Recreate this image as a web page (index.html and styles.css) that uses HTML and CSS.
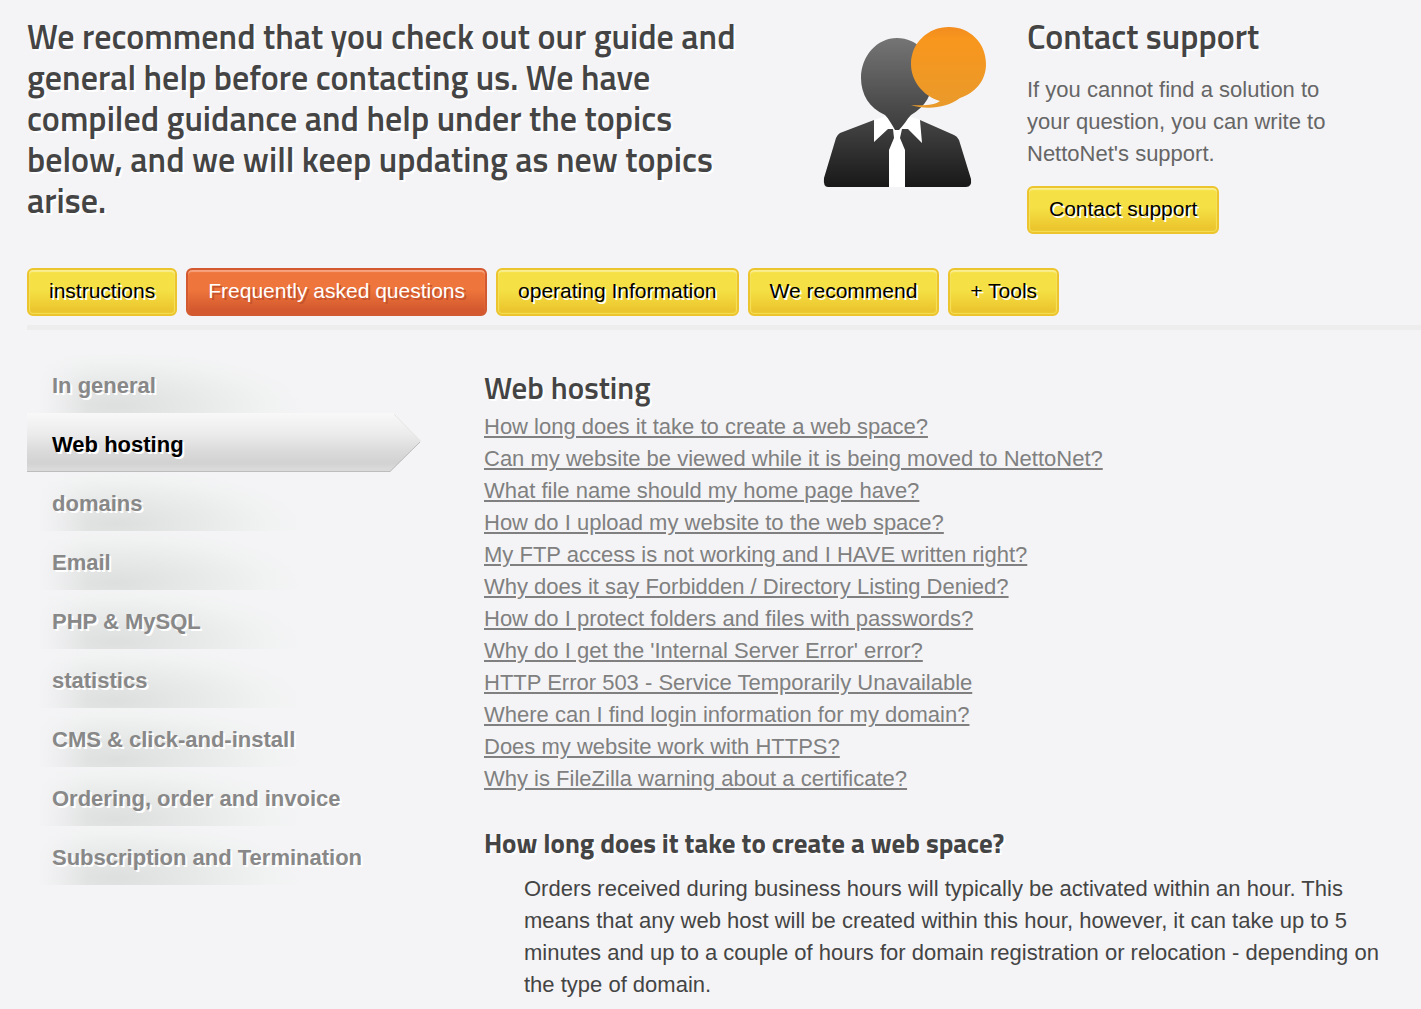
FILE: index.html
```html
<!DOCTYPE html>
<html lang="en">
  <head>
    <meta charset="UTF-8" />
    <meta name="viewport" content="width=device-width, initial-scale=1.0" />
    <title>Help - NettoNet</title>
    <link rel="stylesheet" href="styles.css">
  </head>
  <body>
    <header class="intro">
      <h1>We recommend that you check out our guide and general help before contacting us. We have compiled guidance and help under the topics below, and we will keep updating as new topics arise.</h1>
      <svg class="supporter" viewBox="0 0 164 162" aria-hidden="true">
        <defs>
          <linearGradient id="head" x1="0" y1="0" x2="0" y2="1">
            <stop offset="0" stop-color="#757575" />
            <stop offset="1" stop-color="#3c3c3c" />
          </linearGradient>
          <linearGradient id="suit" x1="0" y1="0" x2="0" y2="1">
            <stop offset="0" stop-color="#454545" />
            <stop offset="1" stop-color="#181818" />
          </linearGradient>
          <linearGradient id="bubble" x1="0" y1="0" x2="0" y2="1">
            <stop offset="0" stop-color="#f28c1f" />
            <stop offset="0.15" stop-color="#f8961d" />
            <stop offset="1" stop-color="#e99a2b" />
          </linearGradient>
        </defs>
        <path fill="url(#suit)" d="M51 93 L97 93 L131 108 Q134 109 136 113 L148 152 Q149 160 143 160 L5 160 Q0 160 1 151 L13 111 Q14 108 17 106 Z" />
        <path fill="#fff" d="M51 93 L63 89 L86 89 L97 93 L99 116 L85 102 L79 102 L77 111 L82 123 L82 160 L66 160 L66 123 L71 111 L70 102 L65 102 L51 115 Z" />
        <path fill="url(#head)" d="M74 11 C94 11 110 28 110 50 C110 67 102 80 88 88 C84 92 81 98 76 103 L72 103 C69 98 66 92 62 88 C46 81 38 67 38 51 C38 29 54 11 74 11 Z" />
        <path fill="url(#bubble)" d="M126 0 C147 0 163 16 163 37 C163 54 152 66 137 71 C124 81 104 83 88 78 C102 79 112 78 117 74 C100 69 88 54 88 37 C88 16 105 0 126 0 Z" />
      </svg>
      <section class="contact">
        <h2>Contact support</h2>
        <p>If you cannot find a solution to your question, you can write to NettoNet's support.</p>
        <a class="button" href="#">Contact support</a>
      </section>
    </header>

    <nav class="tabs">
      <a class="button" href="#">instructions</a>
      <a class="button selected" href="#">Frequently asked questions</a>
      <a class="button" href="#">operating Information</a>
      <a class="button" href="#">We recommend</a>
      <a class="button" href="#">+ Tools</a>
    </nav>

    <main class="content">
      <nav class="topics">
        <a href="#">In general</a>
        <a class="active" href="#">
          <svg class="arrow" viewBox="0 0 394 59" preserveAspectRatio="none" aria-hidden="true">
            <defs>
              <linearGradient id="bar" x1="0" y1="0" x2="0" y2="1">
                <stop offset="0" stop-color="#f8f8f8" />
                <stop offset="0.35" stop-color="#ececec" />
                <stop offset="0.65" stop-color="#dadada" />
                <stop offset="0.85" stop-color="#d2d2d2" />
                <stop offset="0.95" stop-color="#dadada" />
              </linearGradient>
            </defs>
            <path fill="url(#bar)" d="M0 0 H367 L394 28 L363 59 H0 Z" />
            <path fill="none" stroke="#bdbdbd" d="M0 58.500 H363 L393 29" />
            <path fill="none" stroke="#e6e6e6" d="M367 1 L393 28" />
          </svg>
          <span>Web hosting</span>
        </a>
        <a href="#">domains</a>
        <a href="#">Email</a>
        <a href="#">PHP &amp; MySQL</a>
        <a href="#">statistics</a>
        <a href="#">CMS &amp; click-and-install</a>
        <a href="#">Ordering, order and invoice</a>
        <a href="#">Subscription and Termination</a>
      </nav>

      <article class="faq">
        <h2>Web hosting</h2>
        <ul>
          <li><a href="#create">How long does it take to create a web space?</a></li>
          <li><a href="#">Can my website be viewed while it is being moved to NettoNet?</a></li>
          <li><a href="#">What file name should my home page have?</a></li>
          <li><a href="#">How do I upload my website to the web space?</a></li>
          <li><a href="#">My FTP access is not working and I HAVE written right?</a></li>
          <li><a href="#">Why does it say Forbidden / Directory Listing Denied?</a></li>
          <li><a href="#">How do I protect folders and files with passwords?</a></li>
          <li><a href="#">Why do I get the 'Internal Server Error' error?</a></li>
          <li><a href="#">HTTP Error 503 - Service Temporarily Unavailable</a></li>
          <li><a href="#">Where can I find login information for my domain?</a></li>
          <li><a href="#">Does my website work with HTTPS?</a></li>
          <li><a href="#">Why is FileZilla warning about a certificate?</a></li>
        </ul>
        <h3 id="create">How long does it take to create a web space?</h3>
        <p>Orders received during business hours will typically be activated within an hour. This means that any web host will be created within this hour, however, it can take up to 5 minutes and up to a couple of hours for domain registration or relocation - depending on the type of domain.</p>
      </article>
    </main>
  </body>
</html>
```

FILE: styles.css
```css
* {
  box-sizing: border-box;
}

body {
  margin: 0;
  padding: 16px 0 8px 27px;
  background-color: #f4f4f6;
  color: #444;
  font-family: "Liberation Sans", Arial, sans-serif;
  font-size: 22px;
  line-height: 32px;
}

h1,
h2,
h3 {
  margin: 0;
  font-family: "Titillium Web", "Open Sans", sans-serif;
  font-weight: 600;
  text-shadow: 2px 2px 0 #fff;
}

h1,
.contact h2 {
  font-size: 34px;
  line-height: 41px;
}

.intro {
  display: grid;
  grid-template-columns: minmax(0, 1fr) 164px 340px;
  column-gap: 40px;
  padding-right: 54px;
}

.intro h1 {
  padding-right: 24px;
}

.supporter {
  width: 164px;
  height: 162px;
  margin-top: 11px;
}

.contact p {
  margin: 17px 0 16px;
  color: #666;
}

.button {
  display: inline-block;
  height: 48px;
  padding: 0 20px;
  border: 2px solid #ecc42d;
  border-radius: 6px;
  background: linear-gradient(#f5e145 45%, #ecc62e 90%);
  box-shadow: inset 0 2px 1px #f9ee90, inset 0 0 1px 1px #f5df58;
  color: #000;
  font-size: 21px;
  line-height: 42px;
  text-decoration: none;
  text-shadow: 2px 2px 0 #fff;
}

.button.selected {
  border-color: #d35a30;
  background: linear-gradient(#ee753b 45%, #d4592f 90%);
  box-shadow: inset 0 2px 1px #f6a480;
  color: #fff;
  text-shadow: 2px 2px 0 #c4532d;
}

.tabs {
  display: flex;
  gap: 9px;
  margin-top: 34px;
  padding-bottom: 9px;
  border-bottom: 5px solid #ededed;
}

.content {
  display: grid;
  grid-template-columns: 394px minmax(0, 1fr);
  column-gap: 63px;
  padding-right: 27px;
}

.topics {
  padding-top: 24px;
}

.topics a {
  display: block;
  position: relative;
  height: 59px;
  padding-left: 25px;
  background:
    linear-gradient(90deg, #f4f4f6 10px, rgba(244, 244, 246, 0) 60px),
    radial-gradient(ellipse 190px 56px at 90px 52px, #dddede, #e8e9e9 45%, #f1f2f2 80%, #f4f4f6);
  color: #888;
  font-weight: bold;
  line-height: 63px;
  text-decoration: none;
  text-shadow: 2px 2px 0 #fff;
}

.topics .active {
  background: none;
  color: #000;
}

.topics span {
  position: relative;
}

.arrow {
  position: absolute;
  inset: 0;
  width: 100%;
  height: 100%;
}

.faq {
  padding-top: 37px;
}

.faq h2 {
  margin-bottom: 2px;
  font-size: 31px;
  line-height: 42px;
}

.faq ul {
  margin: 0 0 31px;
  padding: 0;
  list-style: none;
}

.faq li a {
  color: #808080;
}

.faq h3 {
  font-size: 27px;
  font-weight: bold;
  line-height: 34px;
}

.faq p {
  margin: 13px 0 0 40px;
}
```
